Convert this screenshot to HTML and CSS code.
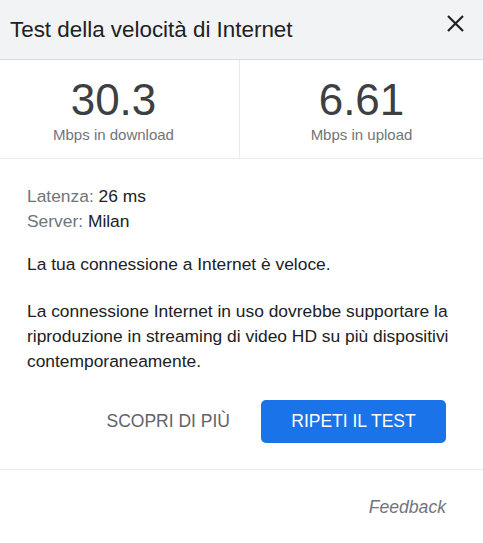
FILE: index.html
```html
<!DOCTYPE html>
<html lang="it">
<head>
    <meta charset="UTF-8">
    <meta name="viewport" content="width=device-width, initial-scale=1.0">
    <title>Test della velocità di Internet</title>
    <link rel="stylesheet" href="styles.css">
</head>
<body>
    <div class="header">
        <h1>Test della velocità di Internet</h1>
        <button class="close" aria-label="Chiudi">
            <svg width="17" height="17" viewBox="0 0 17 17">
                <path d="M1 1 L16 16 M16 1 L1 16" stroke="#202124" stroke-width="2.2" fill="none"/>
            </svg>
        </button>
    </div>
    <div class="stats">
        <div class="stat left">
            <div class="number">30.3</div>
            <div class="unit">Mbps in download</div>
        </div>
        <div class="stat right">
            <div class="number">6.61</div>
            <div class="unit">Mbps in upload</div>
        </div>
    </div>
    <div class="content">
        <div class="details">
            <div><span class="label">Latenza:</span> 26 ms</div>
            <div><span class="label">Server:</span> Milan</div>
        </div>
        <p class="verdict">La tua connessione a Internet è veloce.</p>
        <p class="description">La connessione Internet in uso dovrebbe supportare la riproduzione in streaming di video HD su più dispositivi contemporaneamente.</p>
        <div class="actions">
            <button class="btn flat">SCOPRI DI PIÙ</button>
            <button class="btn primary">RIPETI IL TEST</button>
        </div>
    </div>
    <div class="footer">
        <a class="feedback">Feedback</a>
    </div>
</body>
</html>
```

FILE: styles.css
```css
body {
    margin: 0;
    font-family: "Liberation Sans", Arial, sans-serif;
    color: #202124;
    background: white;
}
.header {
    height: 59px;
    background: #f1f3f4;
    border-bottom: 1px solid #dadce0;
    display: flex;
    align-items: center;
    justify-content: space-between;
    padding: 0 19px 0 10px;
}
.header h1 {
    margin: 0;
    font-size: 22.4px;
    font-weight: normal;
    color: #202124;
}
.close {
    border: none;
    background: none;
    padding: 0;
    display: flex;
    align-self: flex-start;
    margin-top: 15px;
}
.stats {
    display: grid;
    grid-template-columns: 239px 1fr;
    border-bottom: 1px solid #e8eaed;
    height: 98px;
}
.stat {
    text-align: center;
    padding-top: 14px;
}
.stat.left {
    padding-right: 12px;
}
.stat.right {
    border-left: 1px solid #e8eaed;
}
.number {
    font-size: 44px;
    line-height: 52px;
    color: #3c4043;
}
.unit {
    font-size: 15px;
    line-height: 18px;
    color: #70757a;
}
.content {
    padding: 25px 27px 0 27px;
    font-size: 17.4px;
    line-height: 25px;
}
.label {
    color: #70757a;
}
.content p {
    margin: 0;
}
.verdict {
    margin-top: 18px !important;
}
.description {
    margin-top: 22px !important;
}
.actions {
    display: flex;
    justify-content: flex-end;
    gap: 15px;
    margin: 26px 10px 26px 0;
}
.btn {
    height: 43px;
    border: none;
    border-radius: 5px;
    font-family: "Liberation Sans", Arial, sans-serif;
    font-size: 17.5px;
    padding: 0 16px;
    background: none;
    cursor: pointer;
}
.btn.flat {
    color: #5f6368;
}
.btn.primary {
    width: 185px;
    background: #1a73e8;
    color: white;
}
.footer {
    border-top: 1px solid #e8eaed;
    padding: 25px 37px 0 0;
    text-align: right;
    font-size: 17.6px;
    line-height: 25px;
}
.feedback {
    font-style: italic;
    color: #70757a;
}
```
